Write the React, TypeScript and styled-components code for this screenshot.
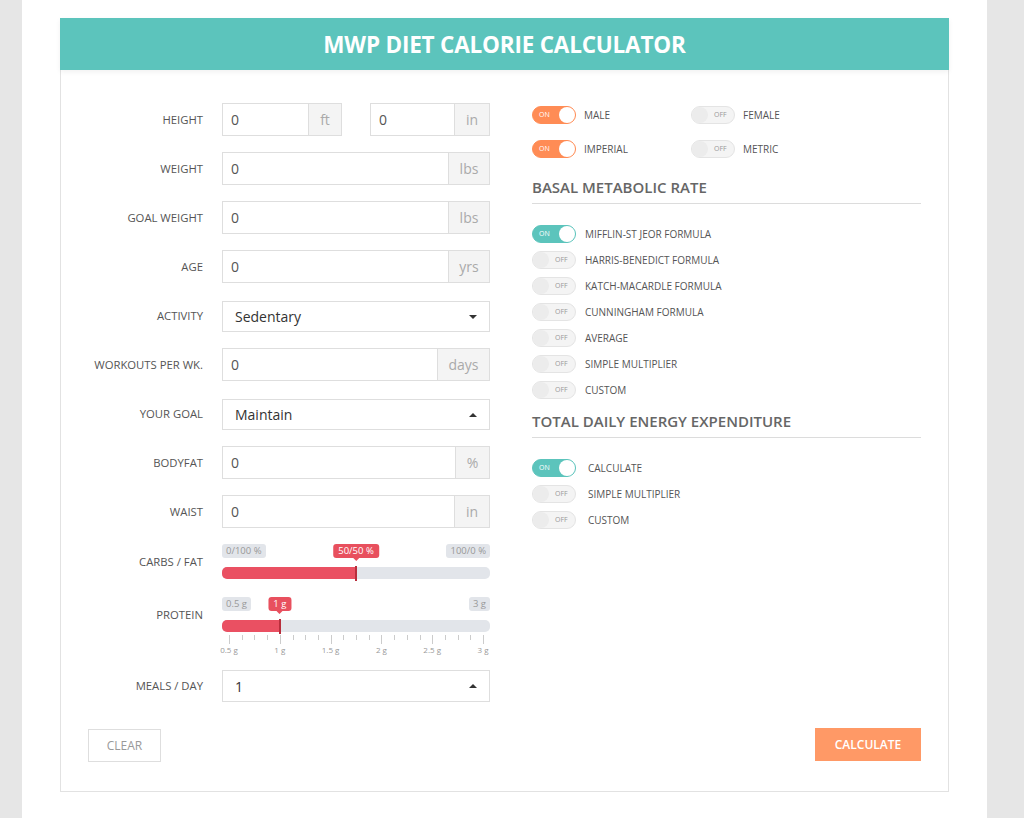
import React from 'react'
import styled, { createGlobalStyle } from 'styled-components'

const GlobalStyle = createGlobalStyle`
  html, body {
    margin: 0;
    padding: 0;
    background: #e6e6e6;
    font-family: "Open Sans", "Liberation Sans", sans-serif;
  }
  * { box-sizing: border-box; }
`

const Page = styled.div({
  marginLeft: '22px',
  width: '965px',
  minHeight: '818px',
  background: '#fff',
  padding: '18px 38px 0',
})

const Card = styled.div`
  border: 1px solid #e2e2e2;
  border-top: none;
  background: #fff;
`

const Header = styled.div`
  height: 52px;
  background: #5cc4bc;
  color: #fff;
  display: flex;
  align-items: center;
  justify-content: center;
  font-size: 22.5px;
  font-weight: 700;
  letter-spacing: -0.2px;
  box-shadow: 0 2px 5px rgba(0, 0, 0, 0.06);
  margin: 0 -1px;
`

const Body = styled.div`
  padding: 33px 27px 29px;
`

const Columns = styled.div`
  display: grid;
  grid-template-columns: 402px 389px;
  column-gap: 42px;
  align-items: start;
`

const Form = styled.div`
  display: grid;
  grid-template-columns: 115px 268px;
  column-gap: 19px;
  row-gap: 16px;
  align-items: center;
`

const Label = styled.div<{ $top?: boolean }>`
  text-align: right;
  font-size: 11.3px;
  line-height: 15px;
  color: #555;
  text-transform: uppercase;
  white-space: nowrap;
  align-self: ${p => (p.$top ? 'start' : 'center')};
  padding-top: ${p => (p.$top ? '10px' : '0')};
`

const Split = styled.div`
  display: grid;
  grid-template-columns: 120px 120px;
  justify-content: space-between;
`

const Group = styled.div`
  display: flex;
  height: 33px;
  border: 1px solid #dedede;
`

const Field = styled.div`
  flex: 1;
  padding-left: 8px;
  display: flex;
  align-items: center;
  font-size: 14px;
  color: #555;
`

const Addon = styled.div<{ $w: number }>`
  width: ${p => p.$w}px;
  background: #f4f4f4;
  border-left: 1px solid #dedede;
  display: flex;
  align-items: center;
  justify-content: center;
  font-size: 14px;
  color: #aaa;
`

const Select = styled.div<{ $mt?: number }>`
  height: ${p => (p.$mt === undefined ? 31 : 32)}px;
  margin-top: ${p => p.$mt ?? 2}px;
  border: 1px solid #dedede;
  display: flex;
  align-items: center;
  justify-content: space-between;
  padding: 0 12px;
  font-size: 14px;
  color: #333;
`

const Caret = styled.span<{ $up?: boolean }>`
  width: 0;
  height: 0;
  border-left: 4px solid transparent;
  border-right: 4px solid transparent;
  ${p => (p.$up ? 'border-bottom: 4px solid #333;' : 'border-top: 4px solid #333;')}
`

const SliderBox = styled.div<{ $mt?: number }>`
  display: flex;
  flex-direction: column;
  margin-top: ${p => p.$mt ?? 0}px;
`

const Tags = styled.div`
  position: relative;
  height: 14px;
  display: flex;
  justify-content: space-between;
  margin-bottom: 9px;
`

const Tag = styled.span`
  font-size: 9.5px;
  line-height: 14px;
  height: 14px;
  padding: 0 4px;
  border-radius: 3px;
  background: #e2e5ea;
  color: #999;
`

const ValueTag = styled.span`
  position: absolute;
  top: 0;
  transform: translateX(-50%);
  font-size: 9.5px;
  line-height: 14px;
  height: 14px;
  padding: 0 5px;
  border-radius: 3px;
  background: #e8505e;
  color: #fff;
  white-space: nowrap;
  &::after {
    content: '';
    position: absolute;
    left: 50%;
    bottom: -3px;
    margin-left: -3px;
    border-left: 3px solid transparent;
    border-right: 3px solid transparent;
    border-top: 3px solid #e8505e;
  }
`

const Track = styled.div`
  position: relative;
  height: 12px;
  border-radius: 5px;
  background: #e2e5ea;
`

const Fill = styled.div`
  position: absolute;
  left: 0;
  top: 0;
  bottom: 0;
  border-radius: 5px 0 0 5px;
  background: #ea5062;
`

const Handle = styled.div`
  position: absolute;
  top: -1px;
  bottom: -2px;
  width: 2px;
  margin-left: -1px;
  background: #b82e3c;
`

const Ticks = styled.div`
  position: relative;
  height: 18px;
  margin-top: 3px;
`

const Tick = styled.span<{ $major?: boolean }>`
  position: absolute;
  top: 0;
  width: 1px;
  height: ${p => (p.$major ? '9px' : '5px')};
  background: #ccc;
`

const TickLabel = styled.span`
  position: absolute;
  top: 9px;
  transform: translateX(-50%);
  font-size: 8px;
  line-height: 11px;
  color: #999;
  white-space: nowrap;
`

const Right = styled.div`
  padding-top: 3px;
  display: flex;
  flex-direction: column;
`

const Pairs = styled.div`
  display: grid;
  grid-template-columns: 159px auto;
  row-gap: 16px;
`

const Heading = styled.div<{ $mt: number }>`
  margin-top: ${p => p.$mt}px;
  font-size: 15px;
  line-height: 20px;
  font-weight: 600;
  color: #666;
  padding-bottom: 6px;
  border-bottom: 1px solid #dcdcdc;
`

const List = styled.div<{ $mt: number }>`
  margin-top: ${p => p.$mt}px;
  display: flex;
  flex-direction: column;
  gap: 8px;
`

const Option = styled.div<{ $gap?: number }>`
  display: flex;
  align-items: center;
  gap: ${p => p.$gap ?? 8}px;
  font-size: 10px;
  color: #555;
  text-transform: uppercase;
`

const Switch = styled.span<{ $on: boolean; $color?: string }>`
  position: relative;
  width: 44px;
  height: 18px;
  border-radius: 9px;
  flex: none;
  background: ${p => (p.$on ? p.$color : '#f4f4f4')};
  border: 1px solid ${p => (p.$on ? p.$color : '#e4e4e4')};
  font-size: 7px;
  line-height: 16px;
  color: ${p => (p.$on ? '#fff' : '#999')};
  text-transform: uppercase;
  padding: ${p => (p.$on ? '0 0 0 6px' : '0 0 0 22px')};
  &::after {
    content: '';
    position: absolute;
    top: 0;
    ${p => (p.$on ? 'right: 0;' : 'left: 0;')}
    width: 16px;
    height: 16px;
    border-radius: 50%;
    background: ${p => (p.$on ? '#fff' : '#ececec')};
  }
`

const Actions = styled.div`
  margin-top: 27px;
  display: flex;
  justify-content: space-between;
`

const ClearButton = styled.button`
  width: 73px;
  height: 33px;
  border: 1px solid #dedede;
  background: #fff;
  color: #999;
  font-family: inherit;
  font-size: 12px;
`

const CalcButton = styled.button`
  width: 106px;
  height: 33px;
  border: none;
  background: #ff9966;
  color: #fff;
  font-family: inherit;
  font-size: 12px;
  font-weight: 600;
  margin-top: -1px;
`

const orange = '#ff8c55'
const teal = '#5cc4bc'

const pct = (v: number) => `calc(7px + (100% - 14px) * ${v})`

type SliderProps = { min: string; max: string; value: number; label: string; ticks?: boolean; mt?: number }

const Slider = ({ min, max, value, label, ticks, mt }: SliderProps) => (
  <SliderBox $mt={mt}>
    <Tags>
      <Tag>{min}</Tag>
      <ValueTag style={{ left: pct(value) }}>{label}</ValueTag>
      <Tag>{max}</Tag>
    </Tags>
    <Track>
      <Fill style={{ width: pct(value) }} />
      <Handle style={{ left: pct(value) }} />
    </Track>
    {ticks && (
      <Ticks>
        {Array.from({ length: 21 }).map((_, i) => (
          <Tick key={i} $major={i % 4 === 0} style={{ left: pct(i / 20) }} />
        ))}
        {['0.5 g', '1 g', '1.5 g', '2 g', '2.5 g', '3 g'].map((t, i) => (
          <TickLabel key={t} style={{ left: pct(i / 5) }}>{t}</TickLabel>
        ))}
      </Ticks>
    )}
  </SliderBox>
)

const Input = ({ unit, w }: { unit: string; w: number }) => (
  <Group>
    <Field>0</Field>
    <Addon $w={w}>{unit}</Addon>
  </Group>
)

const bmr = ['Harris-Benedict Formula', 'Katch-Macardle Formula', 'Cunningham Formula', 'Average', 'Simple Multiplier', 'Custom']

export default function App() {
  return (
    <>
      <GlobalStyle />
      <Page>
        <Card>
          <Header>MWP DIET CALORIE CALCULATOR</Header>
          <Body>
            <Columns>
              <Form>
                <Label>Height</Label>
                <Split>
                  <Input unit="ft" w={33} />
                  <Input unit="in" w={35} />
                </Split>
                <Label>Weight</Label>
                <Input unit="lbs" w={41} />
                <Label>Goal Weight</Label>
                <Input unit="lbs" w={41} />
                <Label>Age</Label>
                <Input unit="yrs" w={41} />
                <Label>Activity</Label>
                <Select>Sedentary<Caret /></Select>
                <Label>Workouts per wk.</Label>
                <Input unit="days" w={52} />
                <Label>Your Goal</Label>
                <Select>Maintain<Caret $up /></Select>
                <Label>Bodyfat</Label>
                <Input unit="%" w={34} />
                <Label>Waist</Label>
                <Input unit="in" w={35} />
                <Label $top>Carbs / Fat</Label>
                <Slider min="0/100 %" max="100/0 %" value={0.5} label="50/50 %" />
                <Label $top style={{ marginTop: 2 }}>Protein</Label>
                <Slider min="0.5 g" max="3 g" value={0.2} label="1 g" ticks mt={2} />
                <Label>Meals / Day</Label>
                <Select $mt={1}>1<Caret $up /></Select>
              </Form>
              <Right>
                <Pairs>
                  <Option><Switch $on $color={orange}>On</Switch>Male</Option>
                  <Option><Switch $on={false}>Off</Switch>Female</Option>
                  <Option><Switch $on $color={orange}>On</Switch>Imperial</Option>
                  <Option><Switch $on={false}>Off</Switch>Metric</Option>
                </Pairs>
                <Heading $mt={19}>BASAL METABOLIC RATE</Heading>
                <List $mt={21}>
                  <Option $gap={9}><Switch $on $color={teal}>On</Switch>Mifflin-St Jeor Formula</Option>
                  {bmr.map(b => (
                    <Option key={b} $gap={9}><Switch $on={false}>Off</Switch>{b}</Option>
                  ))}
                </List>
                <Heading $mt={12}>TOTAL DAILY ENERGY EXPENDITURE</Heading>
                <List $mt={21}>
                  <Option $gap={12}><Switch $on $color={teal}>On</Switch>Calculate</Option>
                  <Option $gap={12}><Switch $on={false}>Off</Switch>Simple Multiplier</Option>
                  <Option $gap={12}><Switch $on={false}>Off</Switch>Custom</Option>
                </List>
              </Right>
            </Columns>
            <Actions>
              <ClearButton>CLEAR</ClearButton>
              <CalcButton>CALCULATE</CalcButton>
            </Actions>
          </Body>
        </Card>
      </Page>
    </>
  )
}
